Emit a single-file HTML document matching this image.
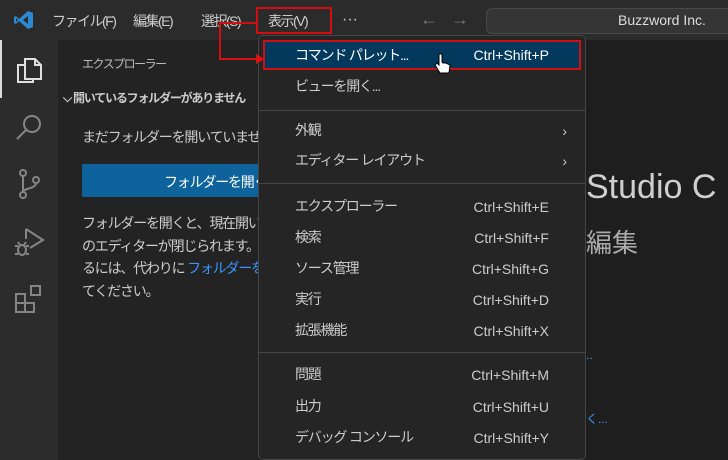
<!DOCTYPE html>
<html><head><meta charset="utf-8"><style>
*{margin:0;padding:0;box-sizing:border-box}
body{width:728px;height:460px;overflow:hidden;background:#1e1e1e;font-family:"Liberation Sans","Noto Sans CJK JP",sans-serif;color:#ccc;position:relative}
.abs{position:absolute}
.j{letter-spacing:-1.2px}
#title{left:0;top:0;width:728px;height:40px;background:#2b2b2b}
.mi{top:11px;font-size:14px;color:#ccc;letter-spacing:-1.5px;line-height:20px}
#act{left:0;top:40px;width:58px;height:420px;background:#2c2c2c}
#side{left:58px;top:40px;width:200px;height:420px;background:#232323}
#menu{left:258px;top:35px;width:328px;height:425px;background:#252526;border:1px solid #454545;border-radius:5px}
.it{position:absolute;left:0;width:326px;height:30px;font-size:14px;color:#ccc}
.it span{line-height:18px}
.it .l{position:absolute;left:36px;top:5px;letter-spacing:-1.2px}
.it .r{position:absolute;right:36px;top:6px}
.sep{position:absolute;left:0;width:326px;height:1px;background:#454545}
</style></head><body>
<div id="title" class="abs"></div>
<svg class="abs" style="left:14px;top:10px" width="20" height="20" viewBox="0 0 20 20"><path d="M14 1 L19 3 V17 L14 19 L5 11 L2 14 L0 13 V7 L2 6 L5 9 Z M14 6 L9 10 L14 14 Z M2 8 V12 L4 10 Z" fill="#2a8ad4" fill-rule="evenodd"/></svg>
<div class="abs mi" style="left:52px">ファイル(F)</div>
<div class="abs mi" style="left:133px">編集(E)</div>
<div class="abs mi" style="left:201px">選択(S)</div>
<div class="abs mi" style="left:268px">表示(V)</div>
<div class="abs" style="left:342px;top:12px;font-size:16px;line-height:16px;color:#ccc">···</div>
<div class="abs" style="left:256px;top:7px;width:76px;height:27px;border:2px solid #d01010"></div>
<div class="abs" style="left:420px;top:9px;font-size:18px;color:#777">←</div>
<div class="abs" style="left:451px;top:9px;font-size:18px;color:#777">→</div>
<div class="abs" style="left:486px;top:8px;width:250px;height:26px;background:#353535;border:1px solid #484848;border-radius:6px"></div>
<div class="abs" style="left:618px;top:12px;font-size:14px;color:#ddd">Buzzword Inc.</div>

<div id="act" class="abs"></div>
<div class="abs" style="left:0;top:40px;width:2px;height:58px;background:#ddd"></div>
<svg class="abs" style="left:14px;top:56px" width="30" height="30" viewBox="0 0 30 30" fill="none" stroke="#e0e0e0" stroke-width="2"><path d="M11 3h10l6 6v14H11z M21 3v6h6"/><path d="M11 9H4v17h15v-3"/></svg>
<svg class="abs" style="left:14px;top:112px" width="30" height="30" viewBox="0 0 30 30" fill="none" stroke="#858585" stroke-width="2"><circle cx="18" cy="12" r="8"/><path d="M12 18L3 27"/></svg>
<svg class="abs" style="left:14px;top:168px" width="30" height="32" viewBox="0 0 30 32" fill="none" stroke="#858585" stroke-width="2"><circle cx="9" cy="5" r="3"/><circle cx="9" cy="27" r="3"/><circle cx="22" cy="12" r="3"/><path d="M9 8v16M22 15c0 6-13 5-13 9"/></svg>
<svg class="abs" style="left:12px;top:226px" width="34" height="32" viewBox="0 0 34 32" fill="none" stroke="#858585" stroke-width="2"><path d="M14 3L31 14L18 22"/><path d="M14 3v10"/><ellipse cx="10" cy="24" rx="4" ry="5"/><path d="M3 20h3M3 28h3M14 20h3M14 28h3M6 16l2 3M14 16l-2 3"/></svg>
<svg class="abs" style="left:14px;top:284px" width="30" height="30" viewBox="0 0 30 30" fill="none" stroke="#858585" stroke-width="2"><rect x="2" y="10" width="9" height="9"/><rect x="2" y="19" width="9" height="9"/><rect x="11" y="19" width="9" height="9"/><rect x="17" y="2" width="9" height="9"/></svg>

<div id="side" class="abs"></div>
<div class="abs j" style="left:82px;top:55px;font-size:12px;color:#bbb;letter-spacing:-1.5px">エクスプローラー</div>
<div class="abs j" style="left:63px;top:89px;font-size:12px;font-weight:bold;color:#ccc;white-space:nowrap">⌵ 開いているフォルダーがありません</div>
<div class="abs j" style="left:82px;top:127px;font-size:14px;color:#ccc;white-space:nowrap">まだフォルダーを開いていません。</div>
<div class="abs" style="left:82px;top:164px;width:180px;height:33px;background:#0e639c;border-radius:2px"></div>
<div class="abs j" style="left:164px;top:172px;font-size:14px;color:#fff;white-space:nowrap">フォルダーを開く</div>
<div class="abs j" style="left:82px;top:212px;font-size:14px;line-height:22.5px;color:#ccc;white-space:nowrap">フォルダーを開くと、現在開いている<br>のエディターが閉じられます。開いた<br>るには、代わりに <span style="color:#3794ff">フォルダーを追加</span><br>てください。</div>

<div class="abs" style="left:586px;top:168px;font-size:34px;color:#cfcfcf;white-space:nowrap">Studio C</div>
<div class="abs" style="left:586px;top:223px;font-size:26px;color:#aaa;white-space:nowrap">編集</div>
<div class="abs" style="left:586px;top:348px;font-size:12px;color:#3794ff">..</div>
<div class="abs" style="left:586px;top:410px;font-size:12px;color:#3794ff">く...</div>

<div id="menu" class="abs">
<div class="it" style="top:4px;background:#04395e;border:2px solid #d01010;left:4px;width:318px"><span class="l" style="left:30px;color:#fff;top:4px">コマンド パレット...</span><span class="r" style="right:30px;color:#fff;top:4px">Ctrl+Shift+P</span></div>
<div class="it" style="top:36px"><span class="l">ビューを開く...</span></div>
<div class="sep" style="top:74px"></div>
<div class="it" style="top:80px"><span class="l">外観</span><span class="r" style="right:18px">›</span></div>
<div class="it" style="top:110px"><span class="l">エディター レイアウト</span><span class="r" style="right:18px">›</span></div>
<div class="sep" style="top:147px"></div>
<div class="it" style="top:156px"><span class="l">エクスプローラー</span><span class="r">Ctrl+Shift+E</span></div>
<div class="it" style="top:187px"><span class="l">検索</span><span class="r">Ctrl+Shift+F</span></div>
<div class="it" style="top:218px"><span class="l">ソース管理</span><span class="r">Ctrl+Shift+G</span></div>
<div class="it" style="top:249px"><span class="l">実行</span><span class="r">Ctrl+Shift+D</span></div>
<div class="it" style="top:280px"><span class="l">拡張機能</span><span class="r">Ctrl+Shift+X</span></div>
<div class="sep" style="top:316px"></div>
<div class="it" style="top:324px"><span class="l">問題</span><span class="r">Ctrl+Shift+M</span></div>
<div class="it" style="top:356px"><span class="l">出力</span><span class="r">Ctrl+Shift+U</span></div>
<div class="it" style="top:387px"><span class="l">デバッグ コンソール</span><span class="r">Ctrl+Shift+Y</span></div>
</div>

<svg class="abs" style="left:218px;top:20px" width="50" height="45" viewBox="0 0 50 45" fill="none"><path d="M38 3H2V39H40" stroke="#d01010" stroke-width="2"/><path d="M38 34L46 39L38 44Z" fill="#e01010"/></svg>
<svg class="abs" style="left:434px;top:53px" width="18" height="22" viewBox="0 0 18 22"><path d="M5 1v11l-2-2-2 2 5 8h9l1-8-4-2-3 0-1-1V1z" fill="#fff" stroke="#000" stroke-width="1"/></svg>
</body></html>
